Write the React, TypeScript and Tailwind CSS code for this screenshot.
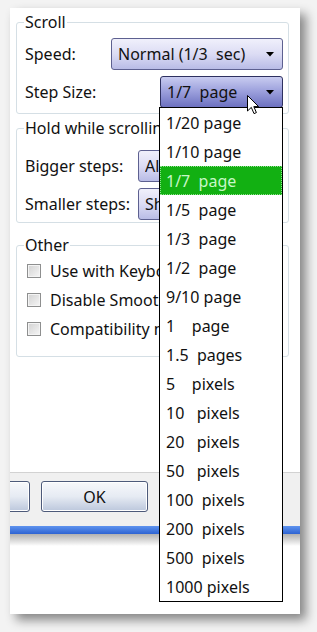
import React from "react";

const FONT = { fontFamily: '"Noto Sans", "Open Sans", sans-serif' };

function Arrow() {
  return (
    <svg width="8" height="5" viewBox="0 0 8 5" className="shrink-0">
      <path d="M0 0 L8 0 L4 4.5 Z" fill="#000" />
    </svg>
  );
}

function Combo({ text, pressed, className }: { text: string; pressed?: boolean; className?: string }) {
  return (
    <div
      className={
        "flex items-center h-[32px] rounded-[3px] border pl-[6px] pr-[8px] " +
        (pressed
          ? "border-[#2e3160] bg-linear-to-b from-[#c9ccf0] via-[#9a9edb] to-[#6d71c0] "
          : "border-[#5d6090] bg-linear-to-b from-[#f0f0fb] via-[#dcdcf4] to-[#b9bce6] ") +
        (className ?? "")
      }
    >
      <span className="flex-1 whitespace-pre overflow-hidden text-[16px] text-[#111]">{text}</span>
      <Arrow />
    </div>
  );
}

function Check({ label }: { label: string }) {
  return (
    <div className="flex items-center h-[29px]">
      <div className="w-[14px] h-[14px] shrink-0 border border-[#8e8f8f] bg-linear-to-br from-[#d2d2d2] to-[#f6f6f6] shadow-[inset_0_0_0_1px_#f4f4f4] ml-[10px]" />
      <span className="ml-[9px] w-[109px] overflow-hidden whitespace-pre text-[16px] text-[#111]">{label}</span>
    </div>
  );
}

function Group({ title, className, children }: { title: string; className?: string; children: React.ReactNode }) {
  return (
    <div className={"relative w-[273px] border border-[#d5dfe5] rounded-[3px] " + (className ?? "")}>
      <span className="absolute left-[7px] top-[-13px] max-w-[135px] overflow-hidden whitespace-pre bg-white px-[1px] text-[16px] leading-[24px] text-[#111]">
        {title}
      </span>
      {children}
    </div>
  );
}

const items = [
  "1/20 page",
  "1/10 page",
  "1/7  page",
  "1/5  page",
  "1/3  page",
  "1/2  page",
  "9/10 page",
  "1    page",
  "1.5  pages",
  "5    pixels",
  "10   pixels",
  "20   pixels",
  "50   pixels",
  "100  pixels",
  "200  pixels",
  "500  pixels",
  "1000 pixels",
];

export default function App() {
  return (
    <div className="relative w-[317px] h-[632px] overflow-hidden bg-[#f3f3f3] pt-[8px] pl-[10px]" style={FONT}>
      <div className="relative w-[290px] h-[606px] bg-white shadow-[6px_6px_10px_rgba(0,0,0,0.45)] flex flex-col">
        <div className="px-[6px] pt-[14px] h-[464px]">
          <Group title="Scroll" className="h-[92px] pt-[15px] pl-[8px] pr-[5px]">
            <div className="flex items-center h-[32px]">
              <span className="w-[86px] text-[16px] text-[#111]">Speed:</span>
              <Combo text="Normal (1/3  sec)" className="flex-1" />
            </div>
            <div className="flex items-center h-[32px] mt-[6px]">
              <span className="text-[16px] text-[#111]">Step Size:</span>
              <Combo text="1/7  page" pressed className="ml-auto w-[123px]" />
            </div>
          </Group>
          <Group title="Hold while scrolling" className="mt-[14px] h-[95px] pt-[21px] pl-[8px] pr-[5px]">
            <div className="flex items-center h-[32px]">
              <span className="w-[113px] text-[16px] text-[#111]">Bigger steps:</span>
              <Combo text="Alt" className="flex-1" />
            </div>
            <div className="flex items-center h-[32px] mt-[6px]">
              <span className="w-[113px] text-[16px] text-[#111]">Smaller steps:</span>
              <Combo text="Shift" className="flex-1" />
            </div>
          </Group>
          <Group title="Other" className="mt-[22px] h-[112px] pt-[10px]">
            <Check label="Use with Keyboard" />
            <Check label="Disable Smooth Scrolling" />
            <Check label="Compatibility mode" />
          </Group>
        </div>
        <div className="h-[54px] bg-[#f0f0f0] border-t border-[#d2d2d2] overflow-hidden flex items-start pt-[8px]">
          <div className="flex gap-[11px] ml-[-87px]">
            {["", "OK", ""].map((t, i) => (
              <div
                key={i}
                className="w-[107px] h-[31px] shrink-0 rounded-[3px] border border-[#4d5a7a] bg-linear-to-b from-[#f7f8fb] via-[#e6ebf3] to-[#bcc7dc] shadow-[inset_0_0_0_1px_#ffffff] flex items-center justify-center text-[16px] text-[#111]"
              >
                {t}
              </div>
            ))}
          </div>
        </div>
        <div className="h-[8px] bg-linear-to-b from-[#5f93ee] to-[#2d63d2]" />
        <div className="h-[12px] bg-linear-to-b from-[#b0b0b0] to-white" />
      </div>

      {/* dropdown list */}
      <div className="absolute left-[159px] top-[107px] w-[124px] border border-black bg-white">
        {items.map((t) => (
          <div
            key={t}
            className={
              "h-[29px] flex items-center pl-[6px] whitespace-pre text-[16px] " +
              (t === "1/7  page"
                ? "bg-[#12b012] text-[#c8f7c8] outline-1 outline-dotted outline-[#8fe08f] outline-offset-[-1px]"
                : "text-[#111]")
            }
          >
            {t}
          </div>
        ))}
      </div>

      {/* mouse cursor */}
      <svg className="absolute left-[247px] top-[95px]" width="13" height="20" viewBox="0 0 13 20">
        <path d="M0.5 0.5 L0.5 16 L4.3 12.4 L7 18.6 L9.4 17.6 L6.8 11.6 L11.6 11.6 Z" fill="#fff" stroke="#000" strokeWidth="1" strokeLinejoin="round" />
      </svg>
    </div>
  );
}
